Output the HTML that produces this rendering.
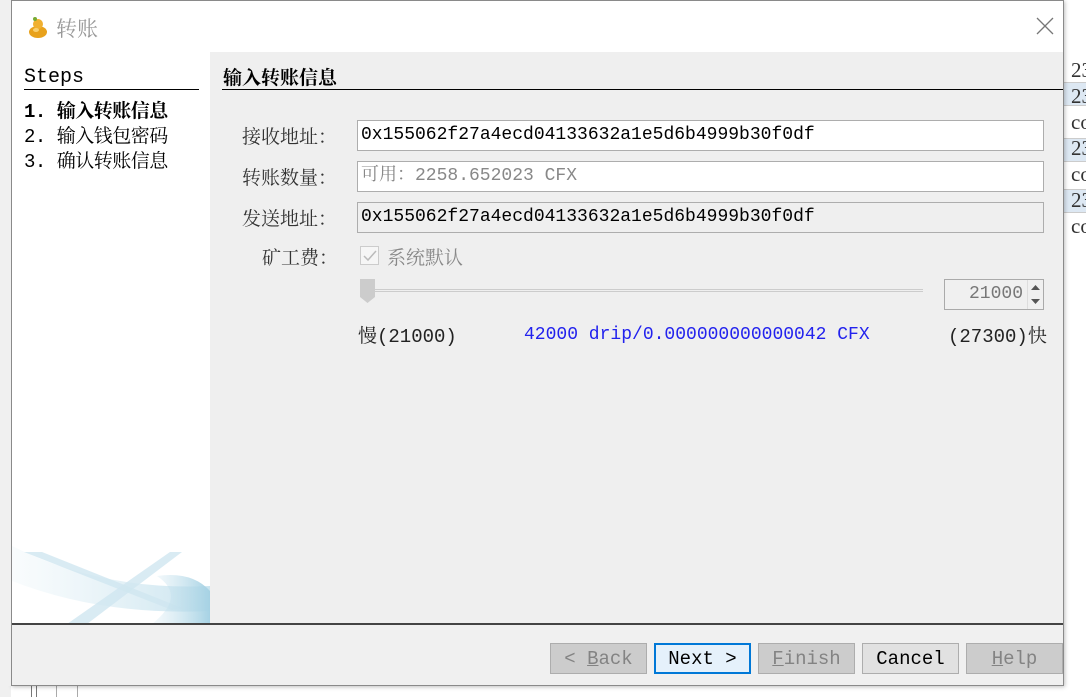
<!DOCTYPE html>
<html><head><meta charset="utf-8"><style>
*{margin:0;padding:0;box-sizing:border-box}
body{width:1086px;height:697px;position:relative;overflow:hidden;background:#fff;font-family:"Liberation Mono","Noto Serif CJK SC",monospace;font-size:18px;color:#000}
.a{position:absolute;white-space:nowrap}
.cj{font-family:"Liberation Mono","Noto Serif CJK SC",monospace}
.inp{position:absolute;left:357px;width:687px;height:31px;border:1px solid #adadad;background:#fff;padding-left:3px;line-height:29px}
.btn{position:absolute;top:643px;height:31px;border:1px solid #adadad;background:#ccc;color:#838383;text-align:center;line-height:31px;font-size:19px}
u{text-decoration:underline}
</style></head><body>
<div class="a" style="left:1063px;top:52px;width:23px;height:190px;background:#fff"></div>
<div class="a" style="left:1063px;top:82px;width:23px;height:24px;background:#dde8f3;border-top:1px solid #ccc;border-bottom:1px solid #ccc"></div>
<div class="a" style="left:1063px;top:138px;width:23px;height:24px;background:#dde8f3;border-top:1px solid #ccc;border-bottom:1px solid #ccc"></div>
<div class="a" style="left:1063px;top:189px;width:23px;height:24px;background:#dde8f3;border-top:1px solid #ccc;border-bottom:1px solid #ccc"></div>
<div class="a" style="left:1071px;top:57px;font-family:'Liberation Serif',serif;font-size:21px;line-height:26px;color:#333">23<br>23<br>co<br>23<br>co<br>23<br>co</div>
<div class="a" style="left:0;top:686px;width:11px;height:11px;background:#f0f0f0"></div>
<div class="a" style="left:31px;top:686px;width:1px;height:11px;background:#777"></div>
<div class="a" style="left:36px;top:686px;width:1px;height:11px;background:#777"></div>
<div class="a" style="left:56px;top:686px;width:1px;height:11px;background:#aaa"></div>
<div class="a" style="left:77px;top:686px;width:1px;height:11px;background:#aaa"></div>
<div class="a" style="left:11px;top:0;width:1053px;height:686px;border:1px solid #8a8a8a;background:#fff;box-shadow:1px 1px 4px rgba(0,0,0,.25)"></div>
<div class="a" style="left:0;top:0;width:11px;height:686px;background:#f0f0f0"></div>
<svg class="a" style="left:27px;top:15px" width="22" height="24" viewBox="0 0 22 24"><ellipse cx="11" cy="17" rx="9" ry="6" fill="#e8a21c"/><ellipse cx="11" cy="9" rx="5" ry="5" fill="#f0b030"/><circle cx="8" cy="4" r="2" fill="#7a3"/><ellipse cx="9" cy="15" rx="3" ry="2" fill="#f8d070"/></svg>
<div class="a cj" style="left:56px;top:13px;font-size:21px;color:#999">转账</div>
<svg class="a" style="left:1036px;top:17px" width="18" height="18"><path d="M1 1L17 17M17 1L1 17" stroke="#777" stroke-width="1.3"/></svg>
<div class="a" style="left:24px;top:66px;font-size:20px">Steps</div>
<div class="a" style="left:24px;top:89px;width:175px;height:1px;background:#000"></div>
<div class="a cj" style="left:24px;top:100px;font-size:19px;line-height:25px;letter-spacing:-0.5px"><b>1. 输入转账信息</b><br>2. 输入钱包密码<br>3. 确认转账信息</div>
<svg class="a" style="left:12px;top:536px" width="198" height="88" viewBox="0 0 198 88">
<defs><linearGradient id="g" x1="0" x2="1"><stop offset="0" stop-color="#cfe6f0" stop-opacity=".2"/><stop offset="1" stop-color="#a6d2e4"/></linearGradient></defs>
<path d="M0 10 Q90 55 198 50 L198 75 Q90 80 0 45Z" fill="url(#g)" opacity=".6"/>
<path d="M12 16 L30 16 L170 72 L160 74Z" fill="#cfe6f0" opacity=".8"/>
<path d="M55 88 L158 16 L170 16 L75 88Z" fill="#cfe6f0" opacity=".8"/>
<path d="M145 40 Q180 35 198 55 L198 88 L140 88 Q175 60 145 40Z" fill="url(#g)"/>
</svg>
<div class="a" style="left:210px;top:52px;width:853px;height:572px;background:#efefef"></div>
<div class="a cj" style="left:223px;top:63px;font-size:19px;font-weight:bold">输入转账信息</div>
<div class="a" style="left:222px;top:89px;width:841px;height:1px;background:#000"></div>
<div class="a cj" style="left:242px;top:122px;font-size:19px;color:#333">接收地址：</div>
<div class="a cj" style="left:242px;top:163px;font-size:19px;color:#333">转账数量：</div>
<div class="a cj" style="left:242px;top:204px;font-size:19px;color:#333">发送地址：</div>
<div class="a cj" style="left:262px;top:243px;font-size:19px;color:#333">矿工费：</div>
<div class="inp" style="top:120px">0x155062f27a4ecd04133632a1e5d6b4999b30f0df</div>
<div class="inp cj" style="top:161px;color:#888">可用：2258.652023 CFX</div>
<div class="inp" style="top:202px;background:#efefef">0x155062f27a4ecd04133632a1e5d6b4999b30f0df</div>
<div class="a" style="left:360px;top:246px;width:19px;height:19px;border:1px solid #ccc;background:#f6f6f6"></div>
<svg class="a" style="left:362px;top:248px" width="16" height="16"><path d="M2 8L6 12L14 3" stroke="#bbb" stroke-width="1.5" fill="none"/></svg>
<div class="a cj" style="left:387px;top:243px;font-size:19px;color:#888">系统默认</div>
<div class="a" style="left:367px;top:289px;width:556px;height:3px;border-top:1px solid #ccc;border-bottom:1px solid #ccc"></div>
<svg class="a" style="left:360px;top:279px" width="16" height="25"><path d="M0 0H15V18L7.5 24L0 18Z" fill="#ccc"/></svg>
<div class="a" style="left:944px;top:279px;width:100px;height:31px;border:1px solid #aaa;background:#f0f0f0"></div>
<div class="a" style="left:969px;top:284px;font-size:18px;color:#777">21000</div>
<div class="a" style="left:1027px;top:280px;width:16px;height:29px;border-left:1px solid #ddd"></div>
<svg class="a" style="left:1028px;top:282px" width="15" height="26"><path d="M3 8L7.5 3L12 8Z M3 17L12 17L7.5 22Z" fill="#555"/></svg>
<div class="a cj" style="left:358px;top:321px;font-size:19px;color:#222">慢(21000)</div>
<div class="a" style="left:524px;top:325px;color:#2222ee">42000 drip/0.000000000000042 CFX</div>
<div class="a cj" style="left:948px;top:321px;font-size:19px;color:#222">(27300)快</div>
<div class="a" style="left:12px;top:623px;width:1051px;height:2px;background:#444"></div>
<div class="a" style="left:12px;top:625px;width:1051px;height:60px;background:#f0f0f0"></div>
<div class="btn" style="left:550px;width:97px">&lt; <u>B</u>ack</div>
<div class="btn" style="left:654px;width:97px;border:2px solid #0078d7;background:#e5f1fb;color:#000;line-height:29px">Next &gt;</div>
<div class="btn" style="left:758px;width:97px"><u>F</u>inish</div>
<div class="btn" style="left:862px;width:97px;background:#e1e1e1;color:#000">Cancel</div>
<div class="btn" style="left:966px;width:97px"><u>H</u>elp</div>
</body></html>
